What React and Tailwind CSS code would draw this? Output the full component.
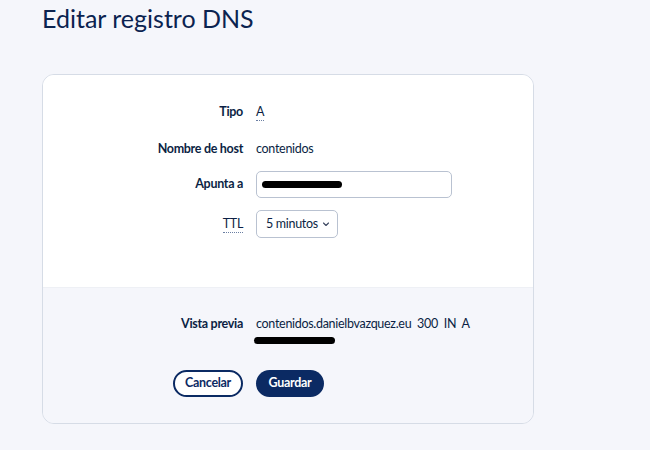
export default function App() {
  const font = { fontFamily: 'Lato, "Noto Sans", sans-serif' }
  return (
    <div className="w-[650px] h-[450px] bg-[#f5f6fb] text-[#0b1f44] overflow-hidden" style={font}>
      <h1 className="pl-[42px] text-[25px] leading-[36px] text-[#0b2350]">Editar registro DNS</h1>

      <div className="mt-[38px] ml-[42px] w-[492px] h-[350px] rounded-[12px] border border-[#d6dce6] overflow-hidden flex flex-col">
        {/* Form */}
        <div className="bg-white h-[212px] pt-[25px] text-[12.5px] tracking-[-0.3px]">
          <div className="grid grid-cols-[200px_1fr] gap-x-[13px] items-center">
            <span className="text-right font-bold h-[24px] leading-[24px]">Tipo</span>
            <span className="h-[24px] leading-[24px]">
              <abbr className="no-underline border-b border-dotted border-[#6b7fa3] pb-[1px]">A</abbr>
            </span>

            <span className="text-right font-bold h-[24px] leading-[24px] mt-[13px]">Nombre de host</span>
            <span className="h-[24px] leading-[24px] mt-[13px]">contenidos</span>

            <span className="text-right font-bold mt-[10px]">Apunta a</span>
            <div className="mt-[10px] w-[196px] h-[27px] rounded-[5px] border border-[#b9c2d1] flex items-center px-[5px]">
              <span className="block w-[80px] h-[7px] bg-black rounded-full" />
            </div>

            <span className="text-right mt-[12px]">
              <abbr className="no-underline border-b border-dotted border-[#6b7fa3] pb-[1px]">TTL</abbr>
            </span>
            <div className="mt-[12px] w-[82px] h-[28px] rounded-[5px] border border-[#b9c2d1] flex items-center justify-between pl-[9px] pr-[7px] whitespace-nowrap">
              <span>5 minutos</span>
              <svg width="8" height="8" viewBox="0 0 8 8" fill="none" stroke="#3a4660" strokeWidth="1.1">
                <path d="M1.5 3l2.5 2.5L6.5 3" strokeLinecap="round" strokeLinejoin="round" />
              </svg>
            </div>
          </div>
        </div>

        {/* Preview + actions */}
        <div className="flex-1 bg-[#f5f6fb] border-t border-[#eef0f5] pt-[27px] text-[12.5px] tracking-[-0.3px]">
          <div className="grid grid-cols-[200px_1fr] gap-x-[13px]">
            <span className="text-right font-bold leading-[18px]">Vista previa</span>
            <div className="flex flex-col">
              <span className="leading-[18px] whitespace-pre">contenidos.danielbvazquez.eu  300  IN  A</span>
              <span className="block mt-[4px] -ml-[2px] w-[81px] h-[7px] bg-black rounded-full" />
            </div>
          </div>

          <div className="grid grid-cols-[200px_1fr] gap-x-[13px] mt-[26px]">
            <div className="flex justify-end">
              <button className="h-[27px] w-[70px] rounded-full border-2 border-[#0b2a63] bg-white text-[#0b2a63] font-bold text-[12.5px]">Cancelar</button>
            </div>
            <div>
              <button className="h-[27px] w-[68px] rounded-full bg-[#0b2a63] text-white font-bold text-[12.5px]">Guardar</button>
            </div>
          </div>
        </div>
      </div>
    </div>
  )
}
